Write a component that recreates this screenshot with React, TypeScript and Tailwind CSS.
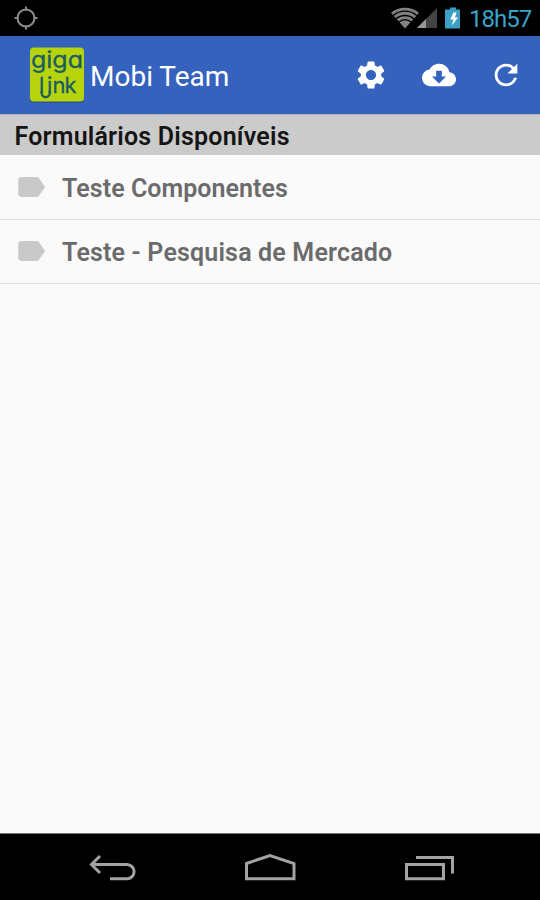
import { MdCloudDownload, MdLabel, MdRefresh, MdSettings } from "react-icons/md";

const forms = [
  { title: "Teste Componentes", tracking: "tracking-[0.05px]" },
  { title: "Teste - Pesquisa de Mercado", tracking: "tracking-[0.17px]" },
];

function Logo() {
  return (
    <svg width="56" height="57" viewBox="0 0 56 57" className="overflow-visible" aria-label="Gigalink">
      <rect x="1" y="1.5" width="54" height="54.5" rx="4" fill="#2a5590" />
      <rect x="1" y="0.5" width="54" height="54" rx="4" fill="#b5d40b" />
      <g
        className="font-[Inter,sans-serif] [font-feature-settings:'cv11']"
        fill="#1c5b62"
        stroke="#1c5b62"
        strokeWidth="0.3"
      >
        <text x="2" y="20.5" fontSize="22.5" textLength="52" lengthAdjust="spacingAndGlyphs">giga</text>
        <text x="10 18 23.5 35.5" y="45.5" fontSize="22">link</text>
      </g>
      {/* hook that ties the l and the i together */}
      <path d="M12.6 44v2a4.1 4.1 0 0 0 8.2 0V44" fill="none" stroke="#1c5b62" strokeWidth="2.2" />
    </svg>
  );
}

function StatusBar() {
  return (
    <div className="flex h-9 shrink-0 items-center justify-between bg-black pl-[14px] pr-[8px]">
      <svg width="24" height="24" viewBox="0 0 24 24" fill="none" stroke="#8c8c8c" strokeWidth="2">
        <circle cx="12" cy="12" r="8.5" />
        <path d="M12 0.5v4M12 19.5v4M0.5 12h4M19.5 12h4" />
      </svg>
      <div className="flex items-center">
        <svg width="70" height="24" viewBox="0 0 70 24">
          <path d="M0 6.8C8 0 20 0 28 6.8L14 22.5z" fill="#818181" />
          <g fill="none" stroke="#000" strokeWidth="1.3">
            <path d="M2 9.7c7-6 17-6 24 0M4.7 13c5.5-4.7 13-4.7 18.6 0M7.5 16.3c4-3.3 9-3.3 13 0" />
          </g>
          <path d="M46 2v20H26z" fill="#444" />
          <path d="M35 13v9h-9z" fill="#989898" />
          <path d="M59 1.5h6v2h4v19H54v-19h5z" fill="#3c9fc4" />
          <path d="M62.5 6.5h3l-1.5 5h3l-6 8 1.2-6h-3z" fill="#fff" />
        </svg>
        <span className="ml-[8px] mt-[2px] w-[63px] whitespace-nowrap text-[24px] leading-none tracking-[-1px] text-[#38a4c8]">18h57</span>
      </div>
    </div>
  );
}

function AppBar() {
  return (
    <header className="flex h-[78px] shrink-0 items-center bg-[#3462bd] pl-[29px] text-white">
      <Logo />
      <h1 className="ml-[5px] mt-[3px] whitespace-nowrap text-[28px] leading-none">Mobi Team</h1>
      <div className="ml-auto flex items-center gap-[34px] pr-[17px]">
        <MdSettings size={34} />
        <MdCloudDownload size={34} />
        <MdRefresh size={34} className="-ml-px" />
      </div>
    </header>
  );
}

function NavBar() {
  return (
    <nav className="flex h-[67px] shrink-0 items-center border-t border-[#777] bg-black pl-[88px]">
      <svg width="368" height="34" viewBox="0 0 368 34" fill="none" stroke="#a3a3a3" strokeWidth="3">
        <path d="M12 6L3.5 14.5L12 23M4 14.5H39a7 7 0 0 1 0 14.2H22" />
        <path d="M158.5 13.5L182 5.5l24 8v15.2h-47.5z" />
        <path d="M318.5 14.5h37v14.2h-37zM328 7.5h36.5v16" />
      </svg>
    </nav>
  );
}

export default function App() {
  return (
    <div className="flex h-[900px] w-[540px] flex-col overflow-hidden bg-[#fafafa] font-[Roboto,sans-serif]">
      <StatusBar />
      <AppBar />
      <main className="flex-1">
        <h2 className="flex h-[41px] items-center border-t border-[#b5b5b5] bg-[#cbcbcb] pl-[14.5px] pt-[3px] text-[25px] font-semibold leading-none tracking-[0.2px] text-[#151515]">
          Formulários Disponíveis
        </h2>
        <ul>
          {forms.map((form) => (
            <li key={form.title} className="flex h-16 items-center shadow-[0_1px_0_#e0e0e0] pl-[14px]">
              <MdLabel size={34} className="shrink-0 text-[#c9c9c9]" />
              <span className={`ml-[14px] mt-[3px] whitespace-nowrap text-[25px] font-semibold leading-none text-[#6b6b6b] ${form.tracking}`}>
                {form.title}
              </span>
            </li>
          ))}
        </ul>
      </main>
      <NavBar />
    </div>
  );
}
